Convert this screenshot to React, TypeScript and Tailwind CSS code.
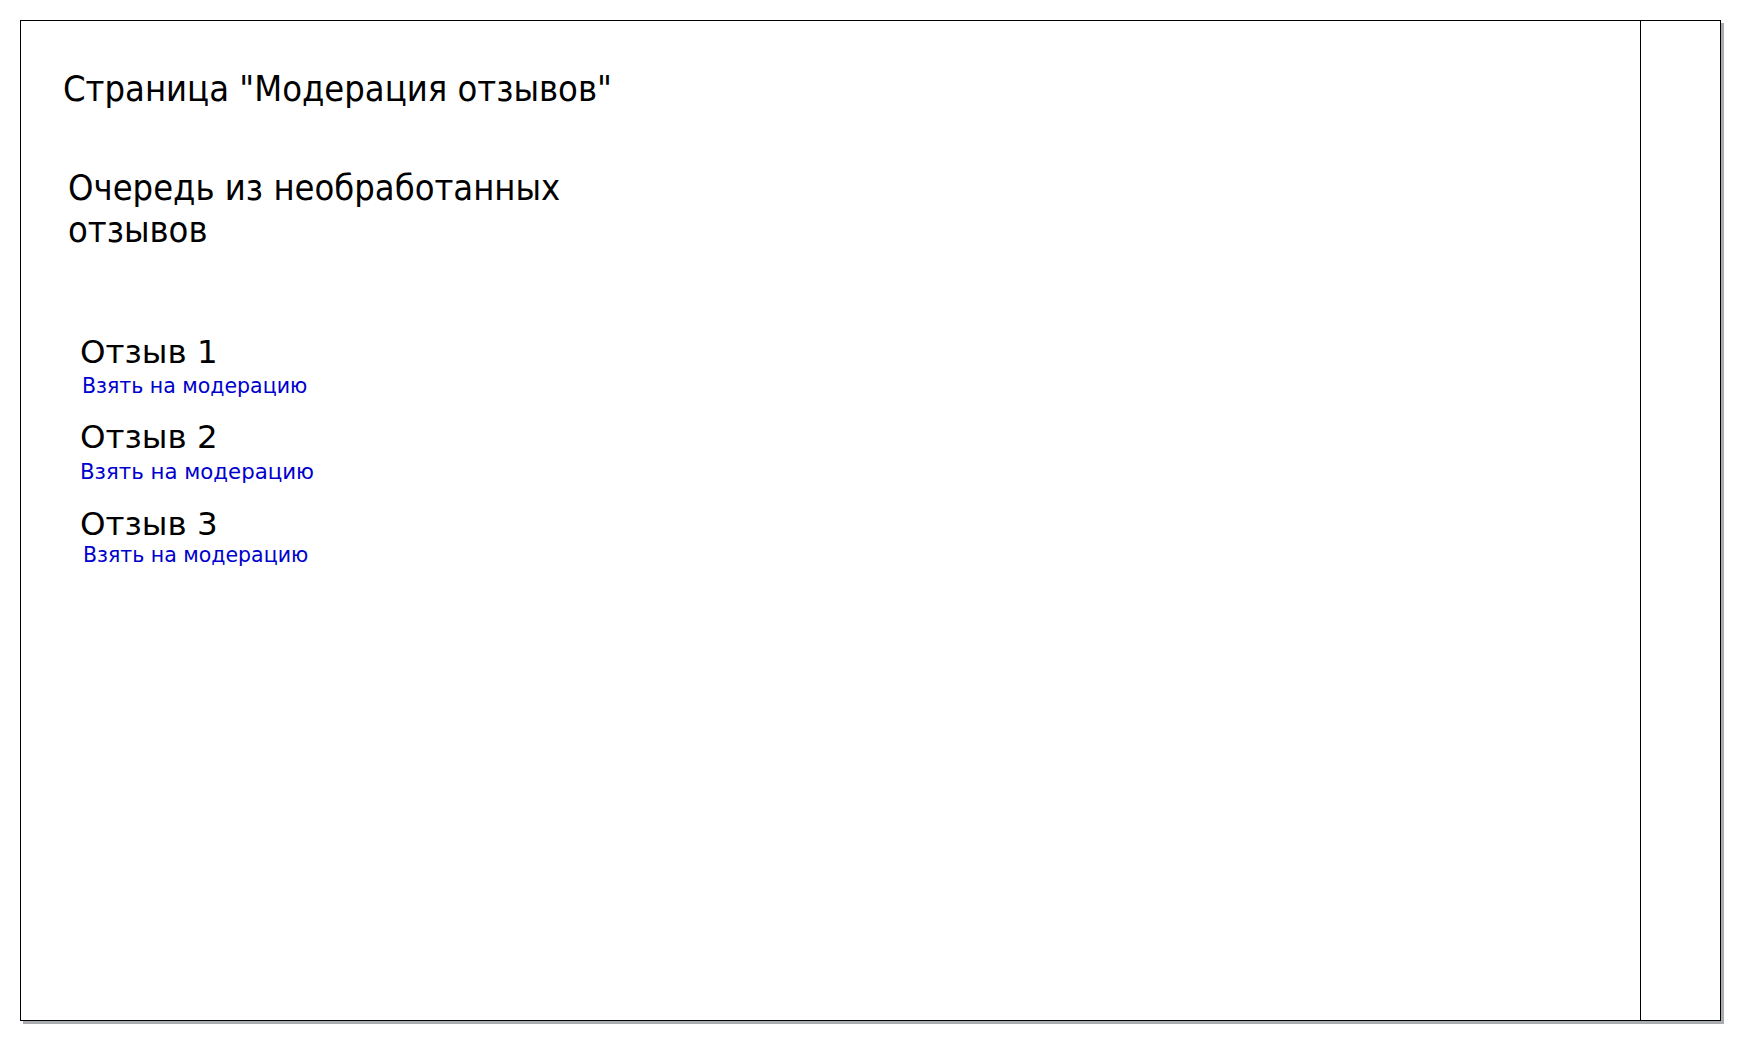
import React from "react";

const reviews = [
  { id: 1, titleClass: "mt-[82px]", linkClass: "ml-[2px] mt-[1px] text-[20.5px] leading-[28px]" },
  { id: 2, titleClass: "mt-[18px]", linkClass: "ml-0 mt-[2px] text-[21.3px] leading-[28px]" },
  { id: 3, titleClass: "mt-[19px]", linkClass: "ml-[3px] -mt-[2px] text-[20.5px] leading-[28px]" },
];

export default function App() {
  return (
    <div className="min-h-[1040px] bg-white p-[20px] font-['DejaVu_Sans',sans-serif] text-black">
      <div className="flex w-[1701px] h-[1001px] border border-black bg-white shadow-[3px_3px_0_0_#a9adb1]">
        <div className="flex-1 border-r border-black pt-[46px]">
          <h1 className="ml-[42px] text-[36px] leading-[44px] font-normal font-['DejaVu_Sans_Condensed','DejaVu_Sans',sans-serif] [font-stretch:condensed]">
            Страница "Модерация отзывов"
          </h1>
          <h2 className="ml-[47px] mt-[56px] text-[36px] leading-[42px] font-normal font-['DejaVu_Sans_Condensed','DejaVu_Sans',sans-serif] [font-stretch:condensed]">
            Очередь из необработанных
            <br />
            отзывов
          </h2>
          <ul className="ml-[59px]">
            {reviews.map((r) => (
              <li key={r.id} className="flex flex-col items-start">
                <div className={`${r.titleClass} text-[32.5px] leading-[38px]`}>Отзыв {r.id}</div>
                <a href="#" className={`${r.linkClass} text-[#0000cd]`}>
                  Взять на модерацию
                </a>
              </li>
            ))}
          </ul>
        </div>
        <div className="w-[79px]" />
      </div>
    </div>
  );
}
